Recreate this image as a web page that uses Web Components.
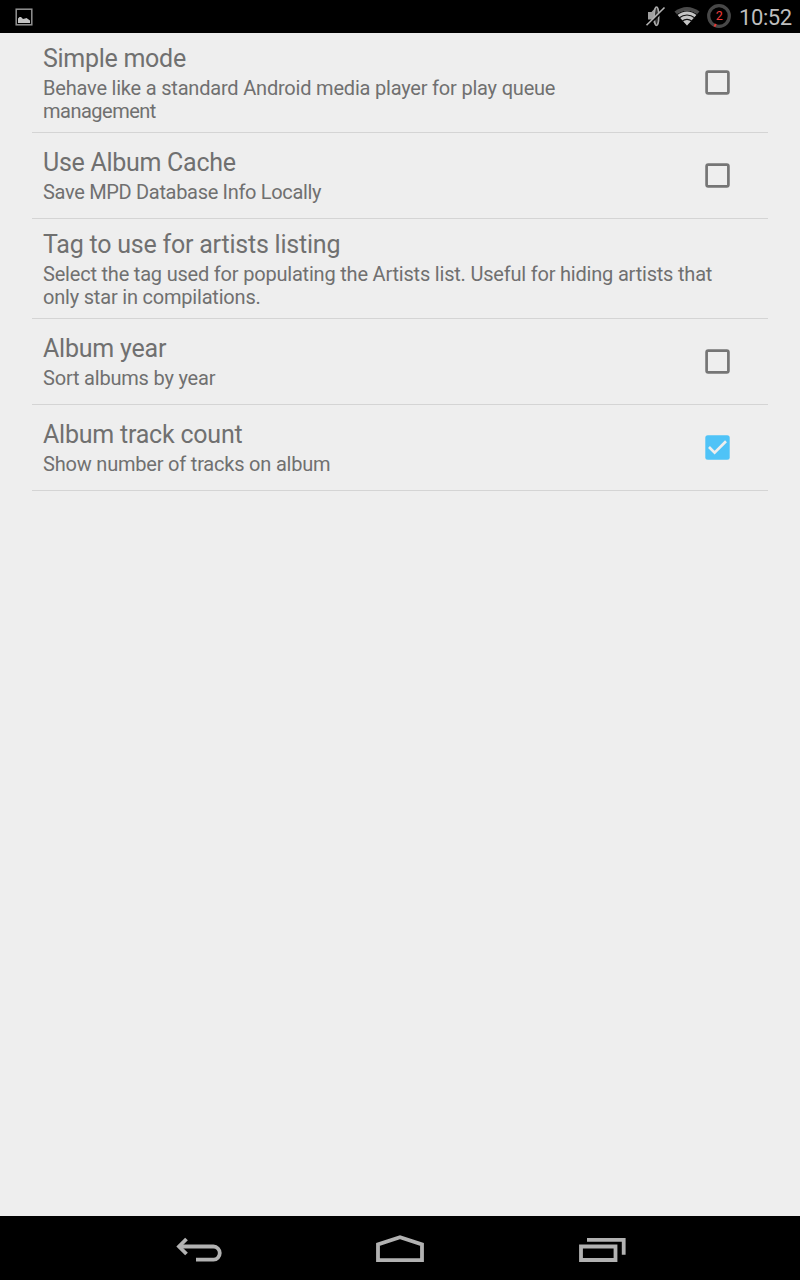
<!DOCTYPE html>
<html lang="en"><head><meta charset="utf-8"><title>Settings</title>
<style>html,body{margin:0;height:100%;background:#eee;font-family:Roboto,"Liberation Sans",sans-serif}</style></head>
<body>
<settings-screen></settings-screen>
<script>
function define(name, html) {
  const t = document.createElement('template');
  t.innerHTML = html;
  customElements.define(name, class extends HTMLElement {
    constructor() {
      super();
      this.attachShadow({mode: 'open'}).appendChild(t.content.cloneNode(true));
    }
  });
}
define('status-bar', `<style>
:host{display:flex;align-items:center;height:33px;background:#000;color:#bebebe;box-sizing:border-box;padding:0 9px 0 0}
svg{display:block;flex:none}.gap{flex:1}
.time{font-size:22px;line-height:33px;width:52px;margin-left:5px;white-space:nowrap;letter-spacing:-.4px;padding-top:1px;box-sizing:border-box;height:33px}
</style>
<svg width="48" height="33"><rect x="16.200" y="9.200" width="15.600" height="15.600" fill="none" stroke="#929292" stroke-width="1.500"/><path d="M18 23v-4.500l1.500-1.500h1.500l2 2 2-.500 1.500-.500 3.500 2.500v2.500z" fill="#c4c4c4"/></svg>
<div class="gap"></div>
<svg width="94" height="33" viewBox="640 0 94 33"><path d="M648 12h3.500l4.500-5v19l-4.500-6.500h-3.500z" fill="#a0a0a0"/><ellipse cx="656.500" cy="16.300" rx="2.300" ry="9.200" fill="#333" stroke="#aaa" stroke-width="1.500"/><path d="M646.500 27L665 9" stroke="#000" stroke-width="2"/><path d="M646.500 25.300L664.500 7.500" stroke="#b3b3b3" stroke-width="1.600"/>
<path d="M687 25.500L674.500 11.500Q687 2.500 699.500 11.500Z" fill="#4b4b4b"/><path d="M687 25.500L677 14.300Q687 6.800 697 14.300Z" fill="#c4c4c4"/><path d="M676.500 15q10.500-8 21 0M679 18q8-6 16 0M682 21.200q5-3.700 10 0" fill="none" stroke="#111" stroke-width="1.200"/>
<circle cx="719" cy="16" r="10.300" fill="none" stroke="#484848" stroke-width="3.200"/><path d="M715.800 23.800l-1.300 2.900" stroke="#e53935" stroke-width="2"/><text x="719.300" y="20.200" text-anchor="middle" font-size="12.500" fill="#f03c3c">2</text></svg>
<div class="time">10:52</div>`);

define('check-box', `<style>:host{display:block;width:25px;height:25px}svg{display:block}.on{display:none}:host([checked]) .on{display:block}:host([checked]) .off{display:none}</style>
<svg class="off" width="25" height="25"><rect x="1.600" y="1.600" width="21.800" height="21.800" rx="1.600" fill="none" stroke="#757575" stroke-width="2.700"/></svg>
<svg class="on" width="25" height="25"><rect x=".3" y=".3" width="24.400" height="24.400" rx="2.500" fill="#4fc3f7"/><path d="M4 12l5.600 5.600L21 6.300" fill="none" stroke="#eee" stroke-width="2.700"/></svg>`);

define('preference-row', `<style>
:host{display:flex;align-items:center;box-sizing:border-box;height:86px;margin:0 32px;padding:0 38px 0 11px;border-bottom:1px solid #d4d4d4;color:#707070}
:host([tall]){height:100px}
.body{flex:1}
.title{font-size:25px;line-height:32px;letter-spacing:-.22px}
.sum{font-size:20px;line-height:23px;letter-spacing:-.2px;white-space:nowrap;margin-top:2px}
:host([tall]) .body{padding-top:1px}
</style><div class="body"><div class="title"><slot name="title"></slot></div><div class="sum"><slot></slot></div></div><slot name="widget"></slot>`);

define('nav-bar', `<style>:host{display:flex;justify-content:center;height:64px;background:#000}svg{display:block}</style>
<svg width="800" height="64" viewBox="0 1216 800 64" fill="none" stroke="#b2b2b2" stroke-width="3.800"><path d="M179 1246.500h34.500a6.300 6.600 0 0 1 0 13.200H196"/><path d="M186.500 1239l-7.500 7.500 7.500 7.500"/><path d="M378 1260.200v-15.700l22-7.200 22 7.200v15.700z"/><path d="M581 1246.500h34.500v13.500H581zM587 1239.800h36.700v15"/></svg>`);

define('settings-screen', `<style>:host{display:flex;flex-direction:column;height:1280px;background:#eee}main{flex:1}</style>
<status-bar></status-bar>
<main>
<preference-row tall><span slot="title" style="letter-spacing:-.28px">Simple mode</span>Behave like a standard Android media player for play queue<br><span style="letter-spacing:-.5px">management</span><check-box slot="widget"></check-box></preference-row>
<preference-row><span slot="title" style="letter-spacing:-.28px">Use Album Cache</span><span style="letter-spacing:-.32px">Save MPD Database Info Locally</span><check-box slot="widget"></check-box></preference-row>
<preference-row tall><span slot="title">Tag to use for artists listing</span>Select the tag used for populating the Artists list. Useful for hiding artists that<br>only star in compilations.</preference-row>
<preference-row><span slot="title">Album year</span>Sort albums by year<check-box slot="widget"></check-box></preference-row>
<preference-row><span slot="title">Album track count</span>Show number of tracks on album<check-box slot="widget" checked></check-box></preference-row>
</main>
<nav-bar></nav-bar>`);
</script></body></html>
